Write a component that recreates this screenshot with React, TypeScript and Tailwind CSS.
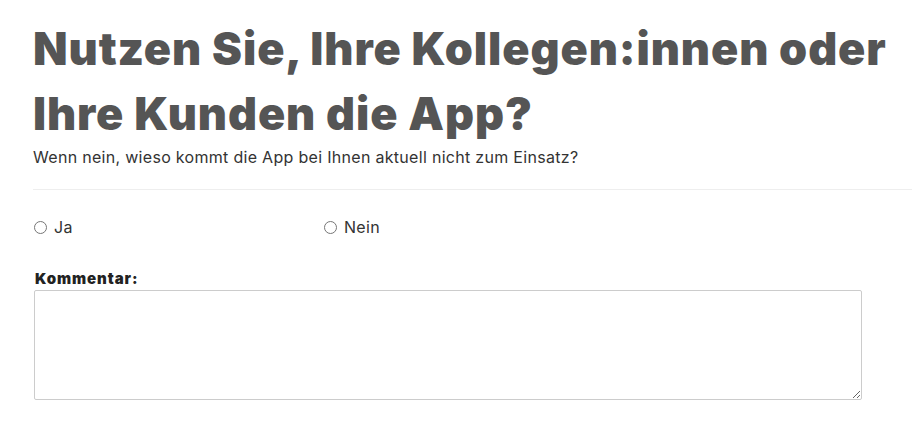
export default function App() {
  return (
    <div className="min-h-screen bg-white pl-[33px] pt-[16px]" style={{ fontFamily: '"Inter", "Noto Sans", sans-serif' }}>
      <h1 className="whitespace-nowrap text-[45px] font-black leading-[65px] tracking-[0.9px] text-[#555555]">
        Nutzen Sie, Ihre Kollegen:innen oder
        <br />
        Ihre Kunden die App?
      </h1>
      <p className="mt-[1px] text-[16px] leading-[20px] tracking-[0.3px] text-[#333333]">
        Wenn nein, wieso kommt die App bei Ihnen aktuell nicht zum Einsatz?
      </p>
      <div className="mt-[22px] border-t border-[#eeeeee]" />
      <div className="mt-[27px] flex pl-[1px] text-[16px] leading-[20px] tracking-[0.3px] text-[#333333]">
        <label className="flex w-[290px] items-center gap-[7px]">
          <input type="radio" name="nutzen" className="m-0 h-[13px] w-[13px]" />
          Ja
        </label>
        <label className="flex items-center gap-[7px]">
          <input type="radio" name="nutzen" className="m-0 h-[13px] w-[13px]" />
          Nein
        </label>
      </div>
      <div className="mt-[33px] pl-[2px] text-[15px] font-black leading-[18px] tracking-[0.9px] text-[#222222]">Kommentar:</div>
      <textarea className="mt-[2px] ml-[1px] block h-[110px] w-[828px] rounded-[2px] border border-[#cccccc] bg-white" />
    </div>
  );
}
